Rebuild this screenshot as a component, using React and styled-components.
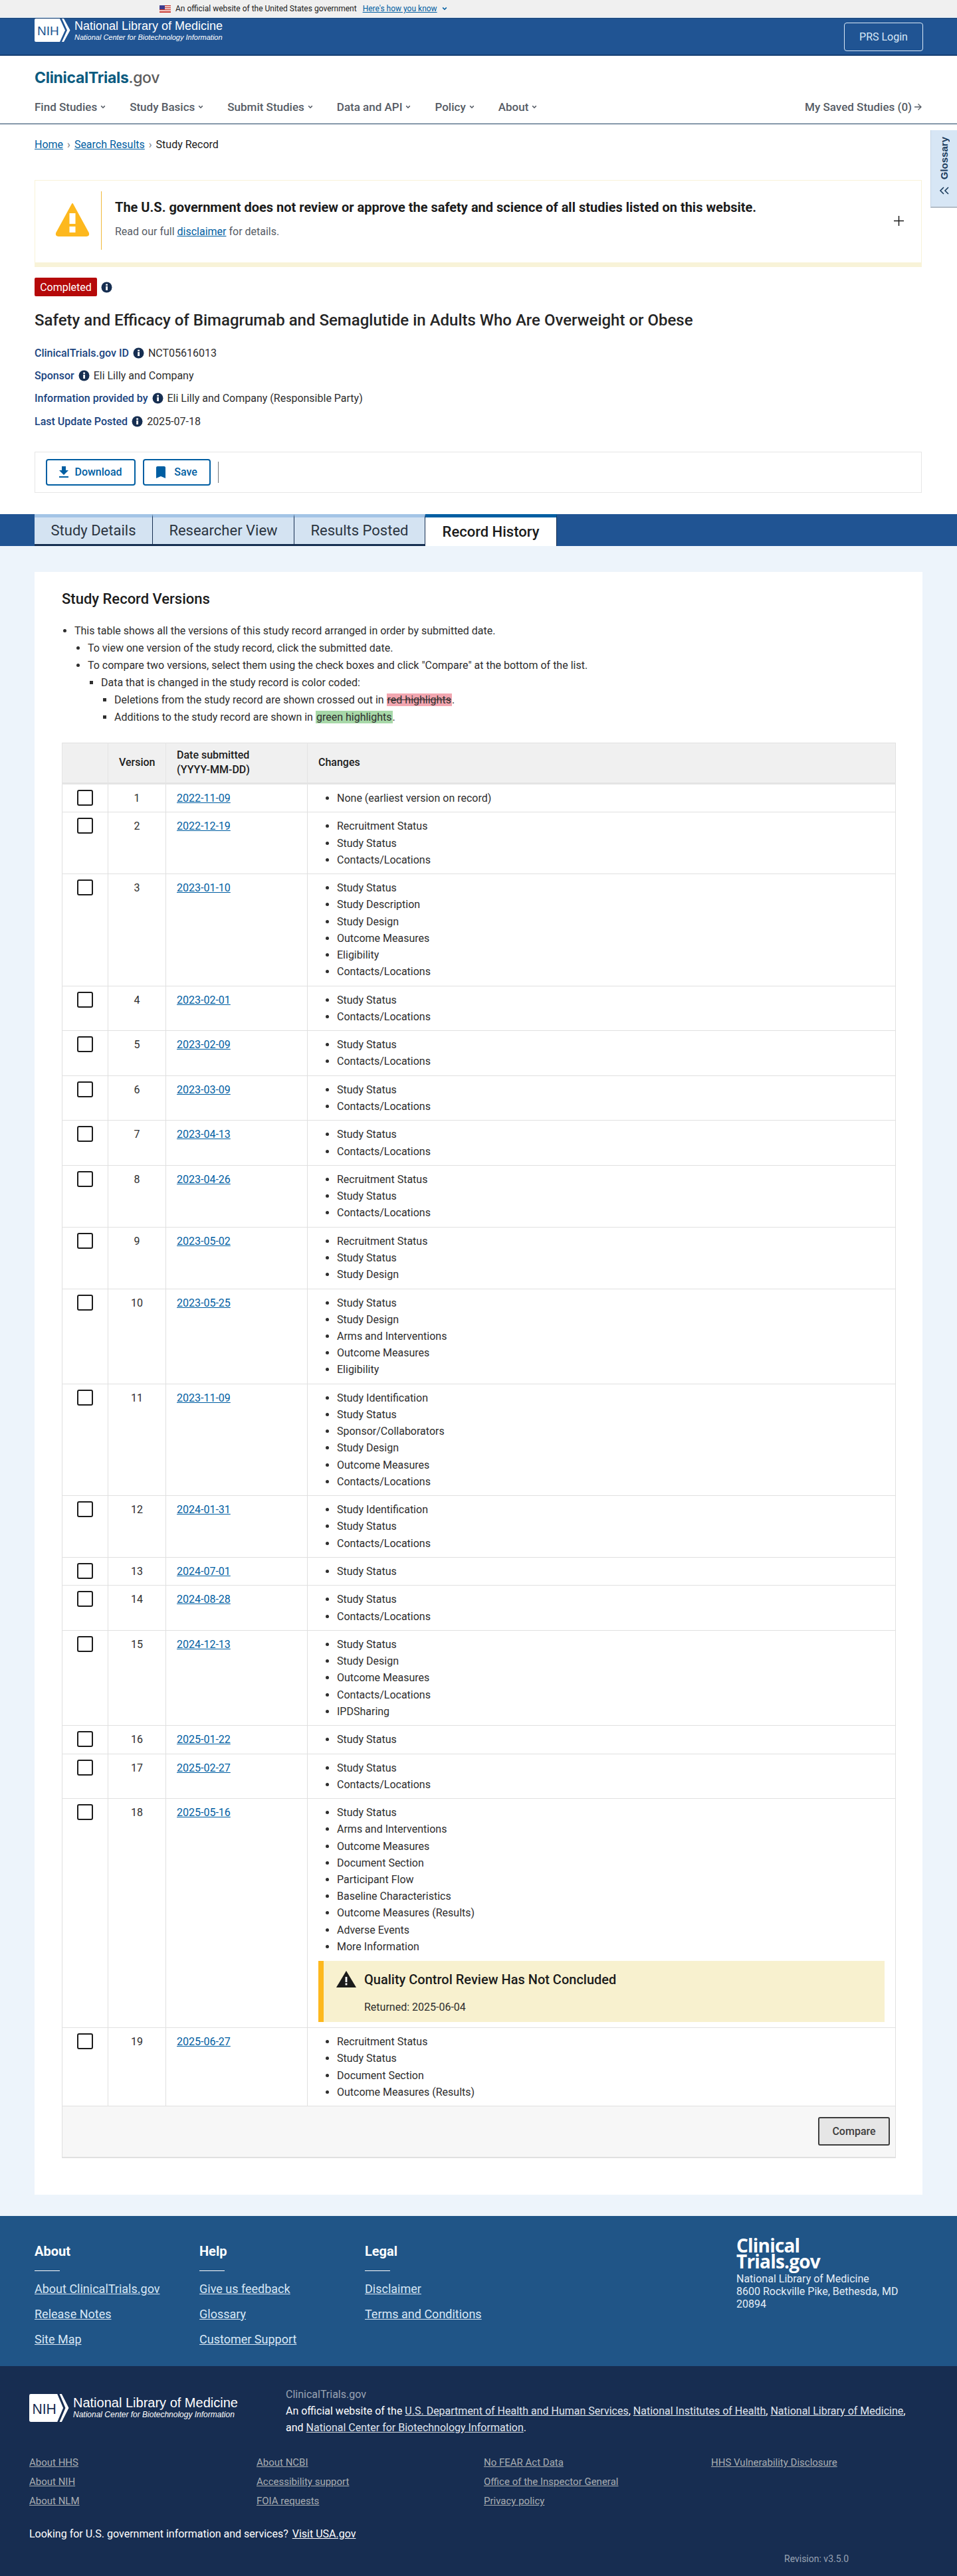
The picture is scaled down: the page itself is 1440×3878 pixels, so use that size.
import React from 'react';
import styled, { createGlobalStyle } from 'styled-components';

const GlobalStyle = createGlobalStyle`
  html, body { margin: 0; padding: 0; }
  body {
    background: #fff;
    color: #1b1b1b;
    font-family: Roboto, "Liberation Sans", Arial, sans-serif;
    font-size: 16px;
  }
  * { box-sizing: border-box; }
`;

const Page = styled.div`
  position: relative;
  width: 1440px;
`;

const GovBanner = styled.div`
  height: 27px;
  background: #f0f0f0;
  border-bottom: 1px solid #cfe0f0;
  padding-left: 240px;
  display: flex;
  align-items: center;
  gap: 7px;
  font-size: 12px;
  color: #1b1b1b;
  a { color: #005ea2; margin-left: 2px; }
`;

const TopBar = styled.header`
  height: 57px;
  background: #205493;
  border-top: 1px solid #163f73;
  border-bottom: 2px solid #163f73;
  padding: 0 51px 0 52px;
  display: flex;
  align-items: center;
  justify-content: space-between;
`;

const NihBrand = styled.div`
  display: flex;
  align-items: center;
  align-self: start;
  gap: ${p => p.$gap}px;
  padding-top: ${p => p.$top || 0}px;
  color: #fff;
  font-family: "Liberation Sans", Arial, sans-serif;
`;

const NihName = styled.div`
  font-size: ${p => p.$size}px;
  line-height: ${p => p.$size + 2}px;
  white-space: nowrap;
`;

const NihSub = styled.div`
  font-size: ${p => p.$size}px;
  line-height: ${p => p.$size + 3}px;
  font-style: italic;
  white-space: nowrap;
`;

const PrsLogin = styled.a`
  width: 119px;
  height: 43px;
  border: 1px solid #d9e8f6;
  border-radius: 4px;
  color: #d9e8f6;
  display: flex;
  align-items: center;
  justify-content: center;
  font-size: 16px;
`;

const SiteNav = styled.nav`
  height: 103px;
  border-bottom: 1px solid #1d3f61;
  padding: 18px 53px 0 52px;
`;

const SiteLogo = styled.div`
  font-family: Inter, sans-serif;
  font-size: 23px;
  line-height: 30px;
  font-weight: 700;
  letter-spacing: -0.3px;
  color: #0b5b7f;
  span { color: #5c5c5c; font-weight: 500; }
`;

const NavRow = styled.div`
  margin-top: 16px;
  display: flex;
  align-items: center;
  justify-content: space-between;
  height: 26px;
`;

const NavLinks = styled.div`
  display: flex;
  gap: 36px;
`;

const NavLink = styled.a`
  display: flex;
  align-items: center;
  gap: 5px;
  font-size: 17px;
  font-weight: 500;
  color: #565c65;
  white-space: nowrap;
`;

const SavedLink = styled(NavLink)`
  gap: 3px;
`;

const Breadcrumb = styled.div`
  padding: 19px 52px 0;
  height: 84px;
  line-height: 24px;
  display: flex;
  gap: 6px;
  a { color: #005ea2; }
  i { color: #71767a; font-style: normal; }
`;

const GlossaryTab = styled.aside`
  position: absolute;
  right: 0;
  top: 196px;
  width: 40px;
  height: 117px;
  background: #d7e6f5;
  border-left: 1px solid #c3d3e3;
  border-bottom: 2px solid #b3bcc6;
  display: flex;
  flex-direction: column;
  align-items: center;
  padding-top: 10px;
  color: #1a3b5c;
  span {
    writing-mode: vertical-rl;
    transform: rotate(180deg);
    font-family: "Liberation Sans", Arial, sans-serif;
    font-weight: 700;
    font-size: 15px;
  }
  svg { margin-top: 11px; }
`;

const Disclaimer = styled.section`
  margin: 0 53px 0 52px;
  height: 131px;
  border: 1px solid #f8f3d8;
  border-bottom: 7px solid #f8f3d8;
  display: flex;
  align-items: flex-start;
  padding: 16px 30px 0 30px;
  position: relative;
`;

const DisclaimerBody = styled.div`
  border-left: 1px solid #f0b93a;
  margin-left: 17px;
  height: 88px;
  padding: 11px 0 0 20px;
  h2 { margin: 0; font-size: 20px; line-height: 26px; font-weight: 700; color: #1b1b1b; }
  p { margin: 13px 0 0; line-height: 22px; color: #565c65; }
  a { color: #005ea2; }
`;

const WarnIconWrap = styled.div`
  padding-top: 17px;
  line-height: 0;
`;

const PlusIcon = styled.div`
  margin-left: auto;
  margin-top: 37px;
  margin-right: -4px;
  line-height: 0;
`;

const StudyHead = styled.div`
  padding: 16px 53px 0 52px;
`;

const StatusRow = styled.div`
  display: flex;
  align-items: center;
  gap: 6px;
`;

const StatusBadge = styled.span`
  width: 94px;
  height: 28px;
  background: #b50909;
  border-radius: 2px;
  color: #fff;
  display: flex;
  align-items: center;
  justify-content: center;
`;

const StudyTitle = styled.h1`
  margin: 21px 0 17px;
  font-size: 24px;
  line-height: 30px;
  font-weight: 500;
  color: #252525;
`;

const MetaRow = styled.div`
  display: flex;
  align-items: center;
  height: 34.4px;
  gap: 6px;
  color: #2e2e2e;
  b { font-weight: 500; color: #1a4480; font-size: 16px; }
`;

const ActionBar = styled.div`
  margin-top: 28.4px;
  height: 62px;
  border: 1px solid #e6e6e6;
  padding: 10px 16px;
  display: flex;
  align-items: flex-start;
  gap: 11px;
`;

const ActionButton = styled.a`
  width: ${p => p.$w}px;
  height: 40px;
  border: 2px solid #005ea2;
  border-radius: 4px;
  display: flex;
  align-items: center;
  justify-content: center;
  gap: ${p => p.$gap}px;
  color: #005ea2;
  font-weight: 500;
  svg { fill: #005ea2; }
`;

const ActionDivider = styled.div`
  width: 1px;
  height: 32px;
  margin-top: 4px;
  background: #71767a;
`;

const TabStrip = styled.div`
  margin-top: 32px;
  height: 48px;
  background: #205493;
  padding-left: 52px;
  display: flex;
`;

const Tab = styled.div`
  width: ${p => p.$w}px;
  height: 48px;
  display: flex;
  align-items: center;
  justify-content: center;
  font-size: 22px;
  background: ${p => (p.$active ? '#fff' : '#d4e3f2')};
  color: ${p => (p.$active ? '#1b1b1b' : '#2b3440')};
  font-weight: ${p => (p.$active ? 500 : 400)};
  border-top: 5px solid ${p => (p.$active ? '#005ea2' : '#a3c4e6')};
  border-right: 1px solid #162e51;
  border-bottom: ${p => (p.$active ? 'none' : '3px solid #162e51')};
`;

const Content = styled.main`
  background: #edf4fb;
  padding: 39px 52px 32px;
`;

const Card = styled.section`
  background: #fff;
  height: 2443px;
  padding: 26px 41px 0;
`;

const CardTitle = styled.h2`
  margin: 0 0 20px;
  font-size: 22px;
  line-height: 30px;
  font-weight: 500;
`;

const Bullets = styled.ul`
  margin: 0;
  padding-left: 19px;
  list-style: ${p => p.$marker || 'disc'};
  line-height: 26px;
  color: #2e2e2e;
  ul { padding-left: 20px; margin: 0; }
`;

const NestedBullets = styled.ul`
  list-style: ${p => p.$marker || 'disc'};
`;

const Deleted = styled.span`
  background: #f2a6b0;
  text-decoration: line-through;
  padding: 0 1px;
`;

const Added = styled.span`
  background: #a7d8a8;
  padding: 0 1px;
`;

const VersionTable = styled.table`
  margin-top: 25px;
  width: 1254px;
  table-layout: fixed;
  border-collapse: collapse;
  border: 1px solid #e0e0e0;
`;

const HeadCell = styled.th`
  height: 61px;
  background: #f0f0f0;
  border-left: 1px solid #e4e4e4;
  border-bottom: 3px solid #e4e4e4;
  font-weight: 500;
  font-size: 16px;
  line-height: 22px;
  color: #1b1b1b;
  padding: 0 16px;
  text-align: ${p => p.$align || 'left'};
`;

const Cell = styled.td`
  border-left: 1px solid #e0e0e0;
  border-bottom: 1px solid #e0e0e0;
  padding: 8px 16px 8.2px;
  vertical-align: top;
  line-height: 25.2px;
  color: #2e2e2e;
  text-align: ${p => p.$align || 'left'};
  a { color: #005ea2; }
`;

const CheckCell = styled(Cell)`
  padding: 8px 0 0 22px;
  line-height: 0;
`;

const CheckBox = styled.span`
  display: block;
  width: 24px;
  height: 24px;
  border: 2px solid #1b1b1b;
  border-radius: 3px;
  background: #fff;
`;

const ChangeList = styled.ul`
  margin: 0;
  padding-left: 28px;
`;

const Notice = styled.div`
  margin-top: 9px;
  height: 92px;
  background: #f8f1cf;
  border-left: 8px solid #fdb81e;
  padding: 15px 0 0 19px;
  display: grid;
  grid-template-columns: 30px 1fr;
  column-gap: 12px;
  h3 { margin: 0; font-size: 20px; line-height: 26px; font-weight: 500; color: #1b1b1b; }
  p { margin: 8px 0 0; grid-column: 2; line-height: 24px; }
`;

const FootCell = styled.td`
  height: 77px;
  background: #f7f7f7;
  border-bottom: 2px solid #e0e0e0;
  padding: 0 8px 0 0;
  text-align: right;
`;

const CompareButton = styled.button`
  width: 108px;
  height: 43px;
  background: #e6e6e6;
  border: 2px solid #3d3d3d;
  border-radius: 3px;
  font: 500 16px Roboto, sans-serif;
  color: #3d3d3d;
`;

const FooterTop = styled.footer`
  height: 226px;
  background: #205587;
  padding: 41px 0 0 52px;
  display: grid;
  grid-template-columns: 248px 249px 559px 1fr;
  color: #fff;
`;

const FooterHeading = styled.h4`
  margin: 0;
  font-size: 20px;
  line-height: 24px;
  font-weight: 700;
  &::after {
    content: '';
    display: block;
    width: 38px;
    height: 1px;
    margin-top: 17px;
    background: #fff;
  }
`;

const FooterLinks = styled.div`
  margin-top: 8px;
  display: flex;
  flex-direction: column;
  a {
    font-size: 18px;
    line-height: 38px;
    color: #d9e8f6;
    text-decoration: underline;
    white-space: nowrap;
  }
`;

const FooterLogo = styled.div`
  margin-top: -9px;
  font-family: "Open Sans", sans-serif;
  font-weight: 700;
  font-size: 28px;
  line-height: 24px;
  letter-spacing: -0.8px;
`;

const Address = styled.address`
  margin-top: 5.5px;
  font-style: normal;
  line-height: 19px;
  color: #e6eef6;
`;

const FooterBottom = styled.div`
  height: 316px;
  background: #172d51;
  padding: 30px 0 0 44px;
  color: #fff;
`;

const AgencyRow = styled.div`
  display: grid;
  grid-template-columns: 386px 945px;
`;

const AgencyText = styled.div`
  line-height: 25px;
  color: #fff;
  a { color: #e0e6ee; text-decoration: underline; }
  small { display: block; font-size: 16px; color: #99a3b3; }
`;

const AgencyLinks = styled.div`
  margin-top: 26.5px;
  display: grid;
  grid-template-columns: repeat(4, 342px);
  a {
    font-size: 15px;
    line-height: 29px;
    color: #a9aeb1;
    text-decoration: underline;
    display: block;
  }
`;

const UsaGov = styled.div`
  margin-top: 22.5px;
  line-height: 24px;
  display: flex;
  gap: 6px;
  a { color: #fff; text-decoration: underline; }
`;

const Revision = styled.div`
  margin-top: 15px;
  padding-left: 1136px;
  font-size: 14px;
  line-height: 20px;
  color: #99a3b3;
`;

const Chevron = ({ size = 8, color = '#565c65' }) => (
  <svg width={size} height={size} viewBox="0 0 10 10" fill="none">
    <path d="M1.5 3l3.5 3.5L8.5 3" stroke={color} strokeWidth="2" />
  </svg>
);

const InfoIcon = () => (
  <svg width="17" height="17" viewBox="0 0 17 17">
    <circle cx="8.5" cy="8.5" r="8" fill="#162e51" />
    <rect x="7.2" y="7" width="2.8" height="6" fill="#fff" />
    <rect x="7.2" y="3.6" width="2.8" height="2.3" fill="#fff" />
  </svg>
);

const WarningIcon = () => (
  <svg width="52" height="52" viewBox="0 0 52 52">
    <path d="M26 2 L50 46 Q51 50 47 50 H5 Q1 50 2 46 Z" fill="#fdb81e" stroke="#fdb81e" strokeWidth="2" strokeLinejoin="round" />
    <rect x="21.500" y="16" width="9" height="16" fill="#fff" />
    <rect x="21.500" y="36" width="9" height="9" fill="#fff" />
  </svg>
);

const NoticeIcon = () => (
  <svg width="30" height="25" viewBox="0 0 30 25">
    <path d="M15 0 L30 25 H0 Z" fill="#1b1b1b" />
    <rect x="13.600" y="9" width="2.800" height="8" fill="#fff" />
    <rect x="13.600" y="18.500" width="2.800" height="3" fill="#fff" />
  </svg>
);

const NihMark = ({ width, height, ink }) => (
  <svg width={width} height={height} viewBox="0 0 54 35" preserveAspectRatio="none">
    <path d="M2 0 H38 L46 17.500 L38 35 H2 Q0 35 0 33 V2 Q0 0 2 0 Z" fill="#fff" />
    <path d="M41 0 H44 L53.500 17.500 L44 35 H41 L49 17.500 Z" fill="#fff" />
    <text x="4" y="25" fontFamily="Liberation Sans, Arial, sans-serif" fontSize="19" fill={ink}>NIH</text>
  </svg>
);

const Flag = () => (
  <svg width="17" height="11" viewBox="0 0 17 11">
    <rect width="17" height="11" fill="#fff" />
    <rect y="0" width="17" height="1.500" fill="#c8382e" />
    <rect y="3" width="17" height="1.500" fill="#c8382e" />
    <rect y="6" width="17" height="1.500" fill="#c8382e" />
    <rect y="9" width="17" height="2" fill="#c8382e" />
    <rect width="8" height="6" fill="#3c3b8e" />
  </svg>
);

const navItems = ['Find Studies', 'Study Basics', 'Submit Studies', 'Data and API', 'Policy', 'About'];

const metaRows = [
  ['ClinicalTrials.gov ID', 'NCT05616013'],
  ['Sponsor', 'Eli Lilly and Company'],
  ['Information provided by', 'Eli Lilly and Company (Responsible Party)'],
  ['Last Update Posted', '2025-07-18'],
];

const tabs = [
  ['Study Details', 178],
  ['Researcher View', 213],
  ['Results Posted', 197],
  ['Record History', 198, true],
];

const versions = [
  ['2022-11-09', ['None (earliest version on record)']],
  ['2022-12-19', ['Recruitment Status', 'Study Status', 'Contacts/Locations']],
  ['2023-01-10', ['Study Status', 'Study Description', 'Study Design', 'Outcome Measures', 'Eligibility', 'Contacts/Locations']],
  ['2023-02-01', ['Study Status', 'Contacts/Locations']],
  ['2023-02-09', ['Study Status', 'Contacts/Locations']],
  ['2023-03-09', ['Study Status', 'Contacts/Locations']],
  ['2023-04-13', ['Study Status', 'Contacts/Locations']],
  ['2023-04-26', ['Recruitment Status', 'Study Status', 'Contacts/Locations']],
  ['2023-05-02', ['Recruitment Status', 'Study Status', 'Study Design']],
  ['2023-05-25', ['Study Status', 'Study Design', 'Arms and Interventions', 'Outcome Measures', 'Eligibility']],
  ['2023-11-09', ['Study Identification', 'Study Status', 'Sponsor/Collaborators', 'Study Design', 'Outcome Measures', 'Contacts/Locations']],
  ['2024-01-31', ['Study Identification', 'Study Status', 'Contacts/Locations']],
  ['2024-07-01', ['Study Status']],
  ['2024-08-28', ['Study Status', 'Contacts/Locations']],
  ['2024-12-13', ['Study Status', 'Study Design', 'Outcome Measures', 'Contacts/Locations', 'IPDSharing']],
  ['2025-01-22', ['Study Status']],
  ['2025-02-27', ['Study Status', 'Contacts/Locations']],
  ['2025-05-16', ['Study Status', 'Arms and Interventions', 'Outcome Measures', 'Document Section', 'Participant Flow', 'Baseline Characteristics', 'Outcome Measures (Results)', 'Adverse Events', 'More Information'], true],
  ['2025-06-27', ['Recruitment Status', 'Study Status', 'Document Section', 'Outcome Measures (Results)']],
];

const footerColumns = [
  ['About', ['About ClinicalTrials.gov', 'Release Notes', 'Site Map']],
  ['Help', ['Give us feedback', 'Glossary', 'Customer Support']],
  ['Legal', ['Disclaimer', 'Terms and Conditions']],
];

const agencyLinks = [
  ['About HHS', 'About NIH', 'About NLM'],
  ['About NCBI', 'Accessibility support', 'FOIA requests'],
  ['No FEAR Act Data', 'Office of the Inspector General', 'Privacy policy'],
  ['HHS Vulnerability Disclosure'],
];

const App = () => (
  <Page>
    <GlobalStyle />
    <GovBanner>
      <Flag />
      <span>An official website of the United States government</span>
      <a href="#how">Here's how you know</a>
      <Chevron size={8} color="#005ea2" />
    </GovBanner>

    <TopBar>
      <NihBrand $gap={6}>
        <NihMark width={54} height={35} ink="#205493" />
        <div>
          <NihName $size={18}>National Library of Medicine</NihName>
          <NihSub $size={11}>National Center for Biotechnology Information</NihSub>
        </div>
      </NihBrand>
      <PrsLogin>PRS Login</PrsLogin>
    </TopBar>

    <SiteNav>
      <SiteLogo>ClinicalTrials<span>.gov</span></SiteLogo>
      <NavRow>
        <NavLinks>
          {navItems.map(item => (
            <NavLink key={item}>{item} <Chevron /></NavLink>
          ))}
        </NavLinks>
        <SavedLink>
          My Saved Studies (0)
          <svg width="12" height="12" viewBox="0 0 12 12" fill="none" stroke="#565c65" strokeWidth="1.300">
            <path d="M1 6h10M6.500 1.500L11 6l-4.500 4.500" />
          </svg>
        </SavedLink>
      </NavRow>
    </SiteNav>

    <Breadcrumb>
      <a href="#home">Home</a><i>›</i>
      <a href="#results">Search Results</a><i>›</i>
      <span>Study Record</span>
    </Breadcrumb>

    <GlossaryTab>
      <span>Glossary</span>
      <svg width="16" height="12" viewBox="0 0 16 12" fill="none" stroke="#1a3b5c" strokeWidth="1.600">
        <path d="M7 1L2 6l5 5M14 1L9 6l5 5" />
      </svg>
    </GlossaryTab>

    <Disclaimer>
      <WarnIconWrap><WarningIcon /></WarnIconWrap>
      <DisclaimerBody>
        <h2>The U.S. government does not review or approve the safety and science of all studies listed on this website.</h2>
        <p>Read our full <a href="#disclaimer">disclaimer</a> for details.</p>
      </DisclaimerBody>
      <PlusIcon>
        <svg width="15" height="15" viewBox="0 0 15 15" stroke="#1b1b1b" strokeWidth="1.500">
          <path d="M7.500 0v15M0 7.500h15" />
        </svg>
      </PlusIcon>
    </Disclaimer>

    <StudyHead>
      <StatusRow>
        <StatusBadge>Completed</StatusBadge>
        <InfoIcon />
      </StatusRow>
      <StudyTitle>Safety and Efficacy of Bimagrumab and Semaglutide in Adults Who Are Overweight or Obese</StudyTitle>
      {metaRows.map(([label, value]) => (
        <MetaRow key={label}>
          <b>{label}</b>
          <InfoIcon />
          <span>{value}</span>
        </MetaRow>
      ))}
      <ActionBar>
        <ActionButton $w={135} $gap={9}>
          <svg width="14" height="17" viewBox="5 3 14 17"><path d="M19 9h-4V3H9v6H5l7 7 7-7zM5 18v2h14v-2H5z" /></svg>
          Download
        </ActionButton>
        <ActionButton $w={102} $gap={13}>
          <svg width="14" height="18" viewBox="5 3 14 18"><path d="M17 3H7c-1.100 0-1.990.9-1.990 2L5 21l7-3 7 3V5c0-1.100-.9-2-2-2z" /></svg>
          Save
        </ActionButton>
        <ActionDivider />
      </ActionBar>
    </StudyHead>

    <TabStrip>
      {tabs.map(([label, w, active]) => (
        <Tab key={label} $w={w} $active={active}>{label}</Tab>
      ))}
    </TabStrip>

    <Content>
      <Card>
        <CardTitle>Study Record Versions</CardTitle>
        <Bullets>
          <li>
            This table shows all the versions of this study record arranged in order by submitted date.
            <NestedBullets>
              <li>To view one version of the study record, click the submitted date.</li>
              <li>
                To compare two versions, select them using the check boxes and click "Compare" at the bottom of the list.
                <NestedBullets $marker="square">
                  <li>
                    Data that is changed in the study record is color coded:
                    <NestedBullets $marker="square">
                      <li>Deletions from the study record are shown crossed out in <Deleted>red highlights</Deleted>.</li>
                      <li>Additions to the study record are shown in <Added>green highlights</Added>.</li>
                    </NestedBullets>
                  </li>
                </NestedBullets>
              </li>
            </NestedBullets>
          </li>
        </Bullets>

        <VersionTable>
          <colgroup>
            <col width="69" />
            <col width="87" />
            <col width="213" />
            <col width="885" />
          </colgroup>
          <thead>
            <tr>
              <HeadCell aria-label="Select" />
              <HeadCell $align="center">Version</HeadCell>
              <HeadCell>Date submitted<br />(YYYY-MM-DD)</HeadCell>
              <HeadCell>Changes</HeadCell>
            </tr>
          </thead>
          <tbody>
            {versions.map(([date, changes, notice], i) => (
              <tr key={date}>
                <CheckCell><CheckBox /></CheckCell>
                <Cell $align="center">{i + 1}</Cell>
                <Cell><a href={`#${date}`}>{date}</a></Cell>
                <Cell>
                  <ChangeList>
                    {changes.map(change => <li key={change}>{change}</li>)}
                  </ChangeList>
                  {notice && (
                    <Notice>
                      <NoticeIcon />
                      <h3>Quality Control Review Has Not Concluded</h3>
                      <p>Returned: 2025-06-04</p>
                    </Notice>
                  )}
                </Cell>
              </tr>
            ))}
          </tbody>
          <tfoot>
            <tr>
              <FootCell colSpan={4}><CompareButton>Compare</CompareButton></FootCell>
            </tr>
          </tfoot>
        </VersionTable>
      </Card>
    </Content>

    <FooterTop>
      {footerColumns.map(([heading, links]) => (
        <div key={heading}>
          <FooterHeading>{heading}</FooterHeading>
          <FooterLinks>
            {links.map(link => <a key={link} href="#f">{link}</a>)}
          </FooterLinks>
        </div>
      ))}
      <div>
        <FooterLogo>Clinical<br />Trials.gov</FooterLogo>
        <Address>National Library of Medicine<br />8600 Rockville Pike, Bethesda, MD<br />20894</Address>
      </div>
    </FooterTop>

    <FooterBottom>
      <AgencyRow>
        <NihBrand $gap={6} $top={12}>
          <NihMark width={60} height={42} ink="#172d51" />
          <div>
            <NihName $size={20}>National Library of Medicine</NihName>
            <NihSub $size={12}>National Center for Biotechnology Information</NihSub>
          </div>
        </NihBrand>
        <AgencyText>
          <small>ClinicalTrials.gov</small>
          An official website of the <a href="#a">U.S. Department of Health and Human Services</a>, <a href="#a">National Institutes of Health</a>, <a href="#a">National Library of Medicine</a>, and <a href="#a">National Center for Biotechnology Information</a>.
        </AgencyText>
      </AgencyRow>
      <AgencyLinks>
        {agencyLinks.map(column => (
          <div key={column[0]}>
            {column.map(link => <a key={link} href="#l">{link}</a>)}
          </div>
        ))}
      </AgencyLinks>
      <UsaGov>
        <span>Looking for U.S. government information and services?</span>
        <a href="#usa">Visit USA.gov</a>
      </UsaGov>
      <Revision>Revision: v3.5.0</Revision>
    </FooterBottom>
  </Page>
);

export default App;
